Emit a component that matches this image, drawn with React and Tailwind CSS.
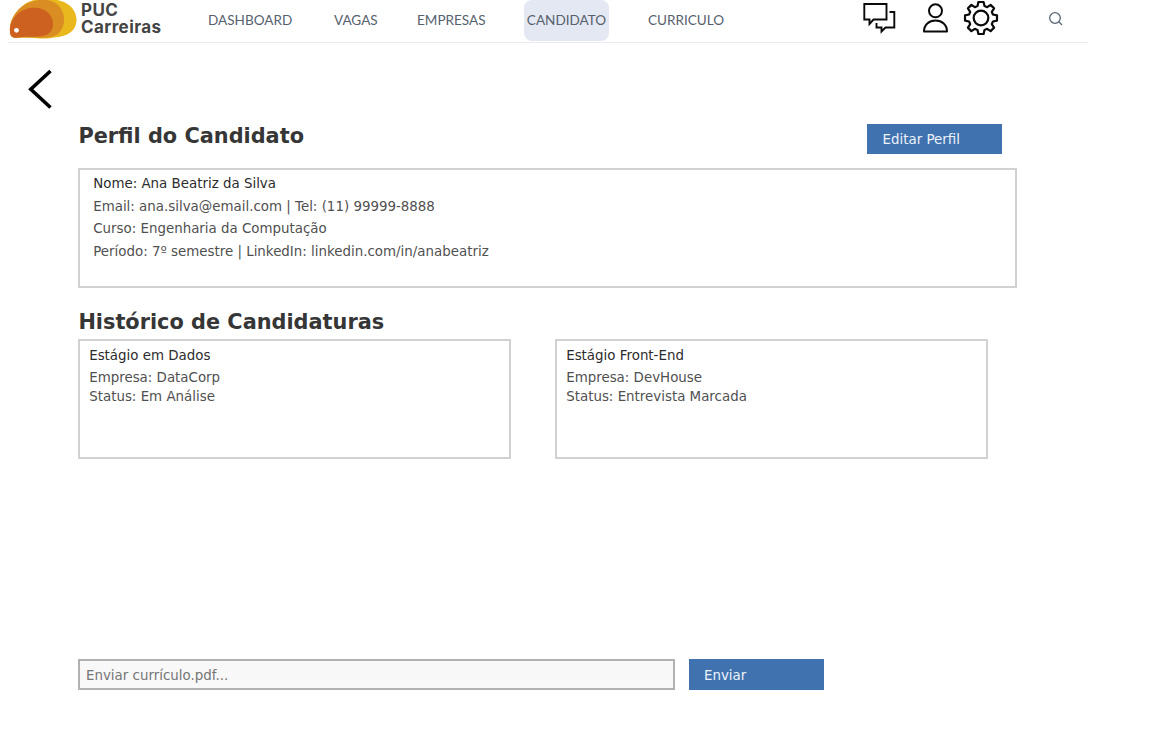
function Logo() {
  return (
    <svg className="block h-10 w-[70px] shrink-0" viewBox="8 0 70 40" fill="none">
      <path d="M10 30C9 20 20 3 34 0C43-3 54-1 61 1C71 4 77 12 76.500 21C76 31 67 37 54 37.500C44 40 34 37 20 37.500C14 38.500 10 36 10 30Z" fill="#e9b81d" />
      <path d="M10 31C9 20 17 7 29 2.500C41-2 53-1 59 6C66 14 66 26 58 34C55 37 46 38.500 38 37.500L16 37.500C12 37.500 10 36 10 31Z" fill="#d98d22" />
      <path d="M10 32C9 21 18 10 30 8C44 6 53 14 53 24C53 32 48 36 38 36.500C31 37 24 36 18 37.500C13 38.500 10 36.500 10 32Z" fill="#cd611f" />
      <circle cx="16.500" cy="30.300" r="2.400" fill="#fff" />
    </svg>
  );
}

function ChatIcon() {
  return (
    <svg className="block h-[34px] w-9" viewBox="862 0 36 34" fill="none" stroke="#0a0a0a" strokeWidth="1.900">
      <path d="M864.300 4H886.500V19.500H873.500L869.500 24V19.500H864.300Z" />
      <path d="M889.500 12H894.300V27.500H885.500L881.500 31.500V27.500H876.500V23" />
    </svg>
  );
}

function UserIcon() {
  return (
    <svg className="block h-[34px] w-7" viewBox="922 0 28 34" fill="none" stroke="#0a0a0a" strokeWidth="2">
      <circle cx="935.500" cy="10.800" r="6.500" />
      <path d="M924 31.500C924 24.500 929 20.600 935.500 20.600S947 24.500 947 31.500Z" strokeLinejoin="round" />
    </svg>
  );
}

function GearIcon() {
  return (
    <svg className="block h-9 w-9" viewBox="-18 -18 36 36" fill="none" stroke="#0a0a0a" strokeWidth="2.200" strokeLinejoin="round">
      <circle r="7.300" />
      <path d="M-2.600-16H2.600L3.500-11.900L6.200-10.800L9.600-13.100L13.100-9.600L10.800-6.200L11.900-3.500L16-2.600V2.600L11.900 3.500L10.800 6.200L13.100 9.600L9.600 13.100L6.200 10.800L3.500 11.900L2.600 16H-2.600L-3.500 11.900L-6.200 10.800L-9.600 13.100L-13.100 9.600L-10.800 6.200L-11.900 3.500L-16 2.600V-2.600L-11.900-3.500L-10.800-6.200L-13.100-9.600L-9.600-13.100L-6.200-10.800L-3.500-11.900Z" />
    </svg>
  );
}

function SearchIcon() {
  return (
    <svg className="block h-4 w-4" viewBox="0 0 16 16" fill="none" stroke="#596673" strokeWidth="1.300" strokeLinecap="round">
      <circle cx="7" cy="7" r="5.300" />
      <path d="M11 11L13.600 13.500" />
    </svg>
  );
}

function Header() {
  return (
    <header className="ml-2 flex h-[43px] w-[1080px] items-start border-b border-[#e8e9f1] text-[#56616d]">
      <Logo />
      <div className="ml-[3px] w-[119px] pt-[2px] font-['Inter'] text-[17px] leading-[17px] font-bold tracking-[0.400px] text-[#444444]">
        <div>PUC</div>
        <div>Carreiras</div>
      </div>
      <nav className="flex h-[41px] w-[655px] items-center font-['Lato'] text-[13.550px] leading-5">
        <a className="-mt-px ml-2 w-[126px]">DASHBOARD</a>
        <a className="-mt-px w-[83px]">VAGAS</a>
        <a className="-mt-px w-[107px]">EMPRESAS</a>
        <a className="flex h-[41px] w-[85px] items-center justify-center rounded-lg bg-[#e4e8f2] pb-px">CANDIDATO</a>
        <a className="-mt-px ml-[39px]">CURRICULO</a>
      </nav>
      <div className="ml-[7px] flex items-start">
        <ChatIcon />
        <div className="ml-6"><UserIcon /></div>
        <div className="ml-[13px]"><GearIcon /></div>
        <div className="mt-[11px] ml-[49px]"><SearchIcon /></div>
      </div>
    </header>
  );
}

function JobCard({ title, company, status }) {
  return (
    <article className="h-[120px] w-[433px] border-2 border-[#d1d1d1] pt-[5px] pl-[9.200px] text-[#505050]">
      <h3 className="h-[22px] leading-5 text-[#2c2c2c]">{title}</h3>
      <p className="h-[19px] leading-5">{company}</p>
      <p className="leading-5">{status}</p>
    </article>
  );
}

export default function App() {
  return (
    <div className="h-[733px] w-[1152px] overflow-hidden bg-white font-['DejaVu_Sans',sans-serif] text-[13.400px]">
      <Header />
      <svg className="mt-6 ml-6 block h-11 w-8" viewBox="24 67 32 44" fill="none" stroke="#000" strokeWidth="3.600">
        <path d="M50.500 71L30.800 89.300L50.500 107.500" />
      </svg>
      <main className="ml-[78px]">
        <div className="mt-[13px] flex h-[44px] w-[924px] justify-between">
          <h1 className="pl-[0.400px] text-[20.850px] leading-6 font-bold text-[#363636]">Perfil do Candidato</h1>
          <button className="h-[30px] w-[135px] bg-[#4072af] pt-[2px] pl-[15.500px] text-left text-[#edf3fa]">Editar Perfil</button>
        </div>
        <section className="h-[120px] w-[939px] border-2 border-[#d1d1d1] pt-[3.400px] pl-[13.200px] leading-[22.400px] text-[#505050]">
          <p className="text-[#2c2c2c]">Nome: Ana Beatriz da Silva</p>
          <p>Email: ana.silva@email.com | Tel: (11) 99999-8888</p>
          <p>Curso: Engenharia da Computação</p>
          <p>Período: 7º semestre | LinkedIn: linkedin.com/in/anabeatriz</p>
        </section>
        <h2 className="mt-[22px] h-[29px] pl-[0.400px] text-[20.850px] leading-6 font-bold text-[#363636]">Histórico de Candidaturas</h2>
        <div className="flex gap-11">
          <JobCard title="Estágio em Dados" company="Empresa: DataCorp" status="Status: Em Análise" />
          <JobCard title="Estágio Front-End" company="Empresa: DevHouse" status="Status: Entrevista Marcada" />
        </div>
        <form className="mt-[200px] flex gap-[14px]">
          <div className="h-[31px] w-[597px] border-2 border-[#b1b1b1] bg-[#f8f8f8] pl-[6px] leading-[29px] text-[#757575]">Enviar currículo.pdf...</div>
          <button type="button" className="h-[31px] w-[135px] bg-[#4072af] pt-[3px] pl-[15px] text-left text-[#edf3fa]">Enviar</button>
        </form>
      </main>
    </div>
  );
}
